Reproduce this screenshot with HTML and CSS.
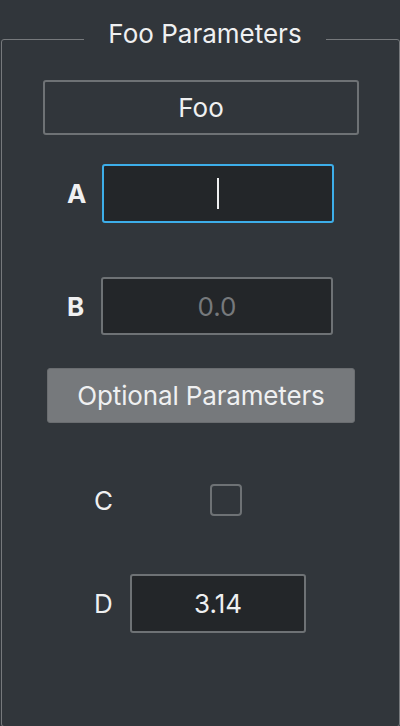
FILE: index.html
```html
<!DOCTYPE html>
<html>
<head>
<meta charset="utf-8">
<link rel="stylesheet" href="styles.css">
</head>
<body>
<div class="frame">
  <div class="legend">Foo Parameters</div>
  <div class="content">
    <div class="btn btn-outline">Foo</div>
    <div class="row row-a">
      <span class="label bold">A</span>
      <div class="field field-focus"><span class="caret"></span></div>
    </div>
    <div class="row row-b">
      <span class="label bold">B</span>
      <div class="field"><span class="placeholder">0.0</span></div>
    </div>
    <div class="btn btn-filled">Optional Parameters</div>
    <div class="row row-c">
      <span class="label">C</span>
      <span class="checkbox"></span>
    </div>
    <div class="row row-d">
      <span class="label">D</span>
      <div class="field field-d">3.14</div>
    </div>
  </div>
</div>
</body>
</html>
```
FILE: styles.css
```css
html, body {
  margin: 0;
  padding: 0;
  background: #31363b;
}
body {
  width: 400px;
  height: 726px;
  overflow: hidden;
  font-family: Inter, "Noto Sans", sans-serif;
  color: #eff0f1;
  font-size: 26px;
}
.frame {
  position: relative;
  box-sizing: border-box;
  margin: 39px 0 0 1px;
  width: 399px;
  height: 688px;
  border: 1px solid #76797c;
  border-radius: 3px;
}
.legend {
  position: absolute;
  top: -21px;
  left: 82px;
  width: 242px;
  line-height: 30px;
  text-align: center;
  background: #31363b;
  font-size: 26px;
}
.content {
  display: flex;
  flex-direction: column;
  padding-top: 40px;
}
.btn {
  box-sizing: border-box;
  display: flex;
  align-items: center;
  justify-content: center;
  border-radius: 3px;
}
.btn-outline {
  margin-left: 41px;
  width: 316px;
  height: 55px;
  border: 2px solid #6e7275;
  font-size: 26px;
}
.btn-filled {
  margin-top: 33px;
  margin-left: 45px;
  width: 308px;
  height: 55px;
  background: #76797c;
  border: 1px solid #6a6d70;
  font-size: 26px;
  letter-spacing: -0.15px;
}
.row {
  display: flex;
  align-items: center;
}
.label {
  display: block;
}
.bold {
  font-weight: 700;
}
.row-a {
  margin-top: 29px;
  padding-left: 65px;
}
.row-a .label { width: 35px; }
.row-b {
  margin-top: 54px;
  padding-left: 65px;
}
.row-b .label { width: 34px; }
.field {
  box-sizing: border-box;
  width: 232px;
  height: 58px;
  background: #232629;
  border: 2px solid #6e7275;
  border-radius: 3px;
  display: flex;
  align-items: center;
  justify-content: center;
}
.field-focus {
  height: 59px;
  border-color: #3daee9;
}
.caret {
  display: block;
  width: 2px;
  height: 31px;
  background: #eff0f1;
}
.placeholder {
  color: #76797c;
}
.row-c {
  margin-top: 61px;
  padding-left: 92px;
}
.row-c .label { width: 116px; }
.checkbox {
  box-sizing: border-box;
  display: block;
  width: 32px;
  height: 32px;
  border: 2px solid #6e7275;
  border-radius: 4px;
}
.row-d {
  margin-top: 58px;
  padding-left: 92px;
}
.row-d .label { width: 36px; }
.field-d {
  width: 176px;
  height: 59px;
}
```
